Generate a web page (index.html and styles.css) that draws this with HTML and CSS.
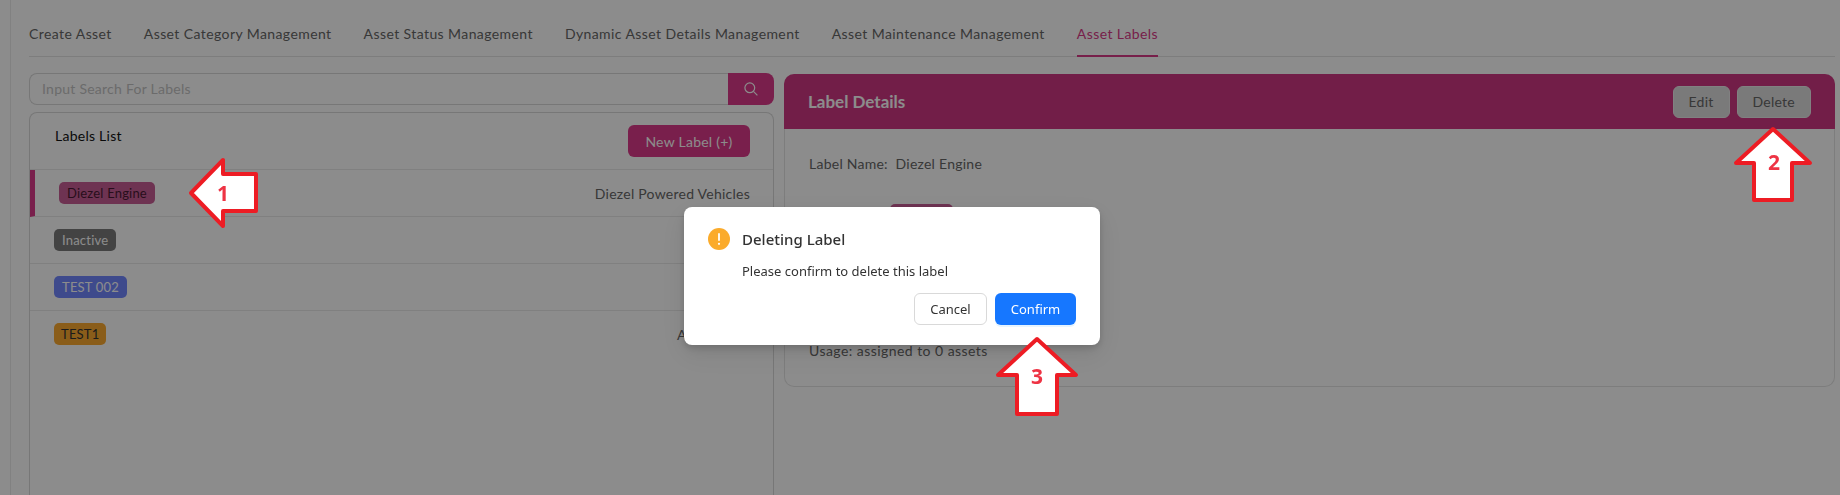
FILE: index.html
```html
<!DOCTYPE html>
<html lang="en">
<head>
    <meta charset="UTF-8">
    <meta name="viewport" content="width=device-width, initial-scale=1.0">
    <title>Asset Labels</title>
    <link rel="stylesheet" href="styles.css">
</head>
<body>
    <div class="page">
        <nav class="tabs">
            <a class="tab">Create Asset</a>
            <a class="tab">Asset Category Management</a>
            <a class="tab">Asset Status Management</a>
            <a class="tab">Dynamic Asset Details Management</a>
            <a class="tab">Asset Maintenance Management</a>
            <a class="tab tab-active">Asset Labels</a>
        </nav>

        <div class="columns">
            <section class="left-column">
                <div class="search">
                    <div class="search-input">Input Search For Labels</div>
                    <button class="search-button">
                        <svg width="14" height="14" viewBox="0 0 14 14" fill="none" stroke="currentColor" stroke-width="1.2">
                            <circle cx="5.8" cy="5.8" r="4.9"/>
                            <path d="M9.4 9.4L13.4 13.4"/>
                        </svg>
                    </button>
                </div>

                <div class="list-card">
                    <div class="list-header">
                        <span class="list-title">Labels List</span>
                        <button class="new-button">New Label (+)</button>
                    </div>
                    <div class="list-row row-active">
                        <span class="chip chip-pink">Diezel Engine</span>
                        <span class="row-text">Diezel Powered Vehicles</span>
                    </div>
                    <div class="list-row">
                        <span class="chip chip-gray">Inactive</span>
                    </div>
                    <div class="list-row">
                        <span class="chip chip-blue">TEST 002</span>
                    </div>
                    <div class="list-row">
                        <span class="chip chip-orange">TEST1</span>
                        <span class="row-text">Asset Label</span>
                    </div>
                </div>
            </section>

            <section class="details">
                <div class="details-header">
                    <h2>Label Details</h2>
                    <div class="details-actions">
                        <button class="light-button">Edit</button>
                        <button class="light-button">Delete</button>
                    </div>
                </div>
                <div class="details-body">
                    <p class="detail-name">Label Name:&nbsp; Diezel Engine</p>
                    <div class="detail-chip"><span class="chip chip-preview">Label</span></div>
                    <p class="detail-usage">Usage: assigned to 0 assets</p>
                </div>
            </section>
        </div>
    </div>

    <div class="mask"></div>

    <div class="modal">
        <div class="modal-title">
            <svg class="modal-icon" width="22" height="22" viewBox="0 0 22 22">
                <circle cx="11" cy="11" r="11" fill="#fbab2b"/>
                <rect x="10.1" y="5" width="1.8" height="8" rx="0.9" fill="#fff"/>
                <circle cx="11" cy="15.8" r="1.1" fill="#fff"/>
            </svg>
            <span>Deleting Label</span>
        </div>
        <p class="modal-text">Please confirm to delete this label</p>
        <div class="modal-actions">
            <button class="modal-cancel">Cancel</button>
            <button class="modal-confirm">Confirm</button>
        </div>
    </div>

    <!-- Red annotation arrows drawn over the screenshot -->
    <svg class="arrow arrow-one" width="78" height="78" viewBox="0 0 78 78">
        <polygon points="6,39 38,6 38,20 71,20 71,57 38,57 38,72" />
        <text x="38" y="47">1</text>
    </svg>
    <svg class="arrow arrow-two" width="86" height="84" viewBox="0 0 86 84">
        <polygon points="43,7 80,41 62,41 62,78 24,78 24,41 6,41" />
        <text x="44" y="48">2</text>
    </svg>
    <svg class="arrow arrow-three" width="90" height="88" viewBox="0 0 90 88">
        <polygon points="45,7 84,43 65,43 65,82 25,82 25,43 6,43" />
        <text x="45" y="52">3</text>
    </svg>
</body>
</html>
```

FILE: styles.css
```css
/* General Styles */
html, body {
    margin: 0;
    padding: 0;
    height: 495px;
    overflow: hidden;
}

body {
    font-family: 'Lato', 'Open Sans', sans-serif;
    background: #fff;
    color: #444;
    font-size: 14px;
}

button {
    font-family: inherit;
    cursor: pointer;
}

.page {
    margin-left: 10px;
    padding: 24px 5px 0 18px;
    border-left: 1px solid #ececec;
    height: 471px;
}

/* Tabs */
.tabs {
    display: flex;
    gap: 32px;
    border-bottom: 1px solid #e4e4e4;
    margin-bottom: 16px;
}

.tab {
    line-height: 20px;
    padding-bottom: 11px;
    margin-bottom: -1px;
    border-bottom: 2px solid transparent;
    color: #666;
    letter-spacing: 0.41px;
}

.tab-active {
    color: #d93a88;
    border-bottom-color: #d93a88;
}

.columns {
    display: grid;
    grid-template-columns: 745px 1fr;
    gap: 10px;
}

/* Left column */
.search {
    display: flex;
    height: 32px;
    margin-bottom: 7px;
}

.search-input {
    flex: 1;
    border: 1px solid #d9d9d9;
    border-right: none;
    border-radius: 8px 0 0 8px;
    padding: 0 12px;
    line-height: 30px;
    color: #c4c4c4;
    letter-spacing: 0.25px;
}

.search-button {
    width: 46px;
    border: none;
    border-radius: 0 8px 8px 0;
    background: #dc3a8a;
    color: #fff;
    display: flex;
    align-items: center;
    justify-content: center;
}

.list-card {
    border: 1px solid #d9d9d9;
    border-bottom: none;
    border-radius: 8px 8px 0 0;
    height: 383px;
    box-sizing: border-box;
}

.list-header {
    display: flex;
    justify-content: space-between;
    align-items: flex-start;
    padding: 12px 23px 12px 25px;
    border-bottom: 1px solid #e9e9e9;
}

.list-title {
    margin-top: 1px;
    line-height: 20px;
    color: #111;
    letter-spacing: 0.25px;
}

.new-button {
    width: 122px;
    height: 32px;
    border: none;
    border-radius: 6px;
    background: #dc3a8a;
    color: #fff;
    font-size: 14px;
    letter-spacing: 0.25px;
}

.list-row {
    display: flex;
    justify-content: space-between;
    align-items: center;
    height: 46px;
    padding: 0 23px 0 24px;
    border-bottom: 1px solid #e9e9e9;
}

.list-row:last-child {
    border-bottom: none;
}

.row-active {
    border-left: 5px solid #dc3a8a;
    padding-left: 24px;
}

.row-text {
    color: #666;
    letter-spacing: 0.25px;
}

.chip {
    display: inline-block;
    height: 22px;
    line-height: 22px;
    padding: 0 8px;
    border-radius: 5px;
    font-size: 13px;
    letter-spacing: 0.2px;
}

.chip-pink, .chip-preview {
    background: #c95e95;
    color: #4a1a34;
}

.chip-preview {
    min-width: 47px;
    text-align: center;
}

.chip-gray {
    background: #7b7b7b;
    color: #fff;
}

.chip-blue {
    background: #7288ff;
    color: #fff;
}

.chip-orange {
    background: #fbaa30;
    color: #333;
    padding: 0 7px;
}

/* Details panel */
.details {
    margin-top: 1px;
    height: 313px;
    border: 1px solid #e4e4e4;
    border-top: none;
    border-radius: 10px;
    box-sizing: border-box;
}

.details-header {
    display: flex;
    justify-content: space-between;
    align-items: center;
    height: 55px;
    padding: 0 24px;
    background: #cf3883;
    border-radius: 10px 10px 0 0;
    margin: 0 -1px;
}

.details-header h2 {
    margin: 0;
    font-size: 17px;
    color: #fff;
    font-weight: 700;
}

.details-actions {
    display: flex;
    gap: 7px;
}

.light-button {
    height: 32px;
    padding: 0 15px;
    border: 1px solid #ececec;
    border-radius: 6px;
    background: #dedede;
    color: #666;
    font-size: 14px;
    letter-spacing: 0.25px;
}

.details-body {
    padding: 25px 24px 0;
}

.detail-name {
    margin: 0;
    line-height: 20px;
    color: #666;
    letter-spacing: 0.25px;
}

.detail-chip {
    margin: 30px 0 0 81px;
}

.detail-usage {
    margin: 115px 0 0;
    line-height: 20px;
    color: #666;
    letter-spacing: 0.45px;
}

/* Modal */
.mask {
    position: fixed;
    inset: 0;
    background: rgba(0, 0, 0, 0.45);
}

.modal {
    position: absolute;
    left: 684px;
    top: 207px;
    width: 416px;
    height: 138px;
    box-sizing: border-box;
    padding: 20px 24px;
    background: #fff;
    border-radius: 8px;
    box-shadow: 0 6px 16px rgba(0, 0, 0, 0.08), 0 3px 6px rgba(0, 0, 0, 0.12), 0 9px 28px rgba(0, 0, 0, 0.05);
    font-family: 'Noto Sans', sans-serif;
    color: #333;
}

.modal-title {
    display: flex;
    align-items: center;
    gap: 12px;
    height: 24px;
    font-size: 15px;
    font-weight: 500;
}

.modal-text {
    margin: 9px 0 0 34px;
    font-size: 13px;
    line-height: 22px;
}

.modal-actions {
    display: flex;
    justify-content: flex-end;
    gap: 8px;
    margin-top: 11px;
}

.modal-cancel, .modal-confirm {
    height: 32px;
    border-radius: 6px;
    font-family: inherit;
    font-size: 13px;
}

.modal-cancel {
    width: 73px;
    border: 1px solid #d9d9d9;
    background: #fff;
    color: #333;
}

.modal-confirm {
    width: 81px;
    border: none;
    background: #1677ff;
    color: #fff;
    box-shadow: 0 2px 0 rgba(5, 145, 255, 0.1);
}

/* Annotation arrows */
.arrow {
    position: absolute;
}

.arrow polygon {
    fill: #fff;
    stroke: #ed1c24;
    stroke-width: 4;
    stroke-linejoin: round;
}

.arrow text {
    font-family: 'Open Sans', sans-serif;
    font-size: 21px;
    font-weight: 700;
    fill: #ee3344;
    text-anchor: middle;
}

.arrow-one {
    left: 185px;
    top: 154px;
}

.arrow-two {
    left: 1730px;
    top: 122px;
}

.arrow-three {
    left: 992px;
    top: 332px;
}
```
